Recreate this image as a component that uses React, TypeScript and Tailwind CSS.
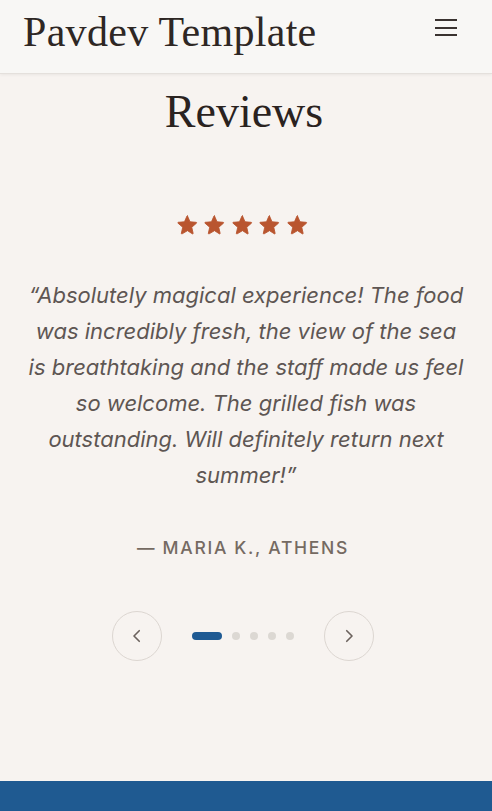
import React from "react";

const Star = () => (
  <svg width="21" height="20" viewBox="0 0 24 23" className="block">
    <path
      d="M12 1.2l2.9 6.6 7.1.6c.5 0 .7.7.3 1l-5.4 4.7 1.6 7c.1.5-.4.9-.9.6L12 18l-6.2 3.7c-.5.3-1-.1-.9-.6l1.6-7L1.1 9.4c-.4-.3-.2-1 .3-1l7.1-.6L11.4 1.2c.2-.5.9-.5 1.1 0z"
      fill="#b9552f"
      stroke="#b9552f"
      strokeWidth="1"
      strokeLinejoin="round"
    />
  </svg>
);

export default function App() {
  return (
    <div className="min-h-[811px] bg-[#f7f3f0] flex flex-col" style={{ fontFamily: "Inter, 'Noto Sans', sans-serif" }}>
      <header className="h-[74px] bg-[#f8f7f5] border-b border-[#e4e0dc] shadow-[0_1px_3px_rgba(0,0,0,0.06)] flex items-center justify-between pl-[23px] pr-[35px]">
        <div className="text-[42px] leading-none text-[#2e2724] tracking-[0.3px] pb-[10px]" style={{ fontFamily: "'Liberation Serif', serif" }}>
          Pavdev Template
        </div>
        <div className="flex flex-col gap-[5.5px] pb-[18px]">
          <span className="block w-[22px] h-[2px] bg-[#3a3330]" />
          <span className="block w-[22px] h-[2px] bg-[#3a3330]" />
          <span className="block w-[22px] h-[2px] bg-[#3a3330]" />
        </div>
      </header>

      <main className="flex-1 flex flex-col items-center px-[27px]">
        <h2 className="mt-[10px] pr-[4px] text-[46px] leading-[56px] text-[#2a2220]" style={{ fontFamily: "'Liberation Serif', serif" }}>
          Reviews
        </h2>

        <div className="mt-[75px] flex gap-[6.5px] pr-[8px]">
          <Star />
          <Star />
          <Star />
          <Star />
          <Star />
        </div>

        <p className="mt-[42px] text-center italic text-[22px] leading-[36px] text-[#5e5653]">
          “Absolutely magical experience! The food was incredibly fresh, the view of the sea is breathtaking and the staff made us feel so welcome. The grilled fish was outstanding. Will definitely return next summer!”
        </p>

        <div className="mt-[42px] pr-[6px] text-[17.5px] leading-[26px] font-medium uppercase tracking-[1.7px] text-[#756a62]">
          — Maria K., Athens
        </div>

        <div className="mt-[50px] pr-[6px] flex items-center">
          <button className="w-[50px] h-[50px] rounded-full border border-[#dcd6d1] flex items-center justify-center">
            <svg width="18" height="18" viewBox="0 0 24 24" fill="none" stroke="#6b625d" strokeWidth="2.2" strokeLinecap="round" strokeLinejoin="round">
              <path d="M15 5l-7 7 7 7" />
            </svg>
          </button>
          <div className="mx-[30px] flex items-center gap-[10px]">
            <span className="block w-[30px] h-[8px] rounded-full bg-[#1f5a93]" />
            <span className="block w-[8px] h-[8px] rounded-full bg-[#dcd8d3]" />
            <span className="block w-[8px] h-[8px] rounded-full bg-[#dcd8d3]" />
            <span className="block w-[8px] h-[8px] rounded-full bg-[#dcd8d3]" />
            <span className="block w-[8px] h-[8px] rounded-full bg-[#dcd8d3]" />
          </div>
          <button className="w-[50px] h-[50px] rounded-full border border-[#dcd6d1] flex items-center justify-center">
            <svg width="18" height="18" viewBox="0 0 24 24" fill="none" stroke="#6b625d" strokeWidth="2.2" strokeLinecap="round" strokeLinejoin="round">
              <path d="M9 5l7 7-7 7" />
            </svg>
          </button>
        </div>
      </main>

      <div className="h-[30px] bg-[#1f5a91]" />
    </div>
  );
}
